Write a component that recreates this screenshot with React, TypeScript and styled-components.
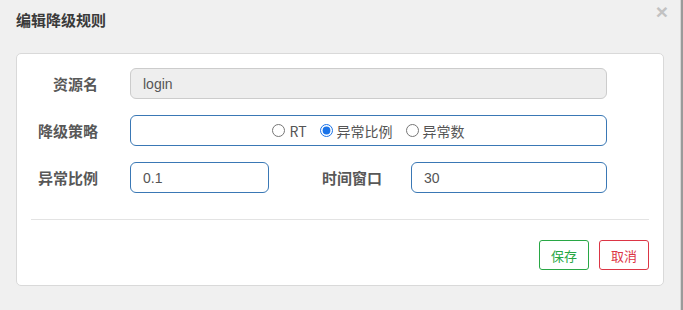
import React from "react";
import styled, { createGlobalStyle } from "styled-components";

const GlobalStyle = createGlobalStyle`
  html, body {
    margin: 0;
    padding: 0;
    background: #f0f0f0;
    font-family: "Noto Sans CJK SC", "Liberation Sans", sans-serif;
    font-size: 14px;
    color: #555;
  }
`

const Page = styled.div`
  display: flex;
  width: 683px;
  height: 310px;
  overflow: hidden;
`

const Dialog = styled.div`
  width: 680px;
  height: 310px;
  background: #f0f0f0;
  box-sizing: border-box;
  padding: 0 16px 0 16px;
  display: flex;
  flex-direction: column;
`

const Backdrop = styled.div`
  flex: 1;
  background: #9a9a9a;
  border-left: 1px solid #d6d6d6;
`

const Header = styled.div`
  display: flex;
  align-items: flex-start;
  height: 53px;
  position: relative;
`

const Title = styled.h4`
  margin: 10px 0 0 0;
  font-size: 15px;
  line-height: 20px;
  font-weight: 700;
  color: #3a3a3a;
  flex: 1;
`

const CloseButton = styled.button`
  position: absolute;
  right: -4px;
  top: 0px;
  height: 24px;
  border: none;
  background: none;
  color: #c2c2c2;
  font-size: 21px;
  font-weight: 700;
  line-height: 22px;
  font-family: "Liberation Sans", sans-serif;
  padding: 0;
  cursor: pointer;
`

const Card = styled.div`
  background: #fff;
  border: 1px solid #d9d9d9;
  border-radius: 5px;
  width: 648px;
  box-sizing: border-box;
  padding: 14px 14px 15px 14px;
`

const Form = styled.div`
  display: flex;
  flex-direction: column;
  gap: 16px;
  padding-right: 42px;
`

const Row = styled.div`
  display: flex;
  align-items: center;
  height: 31px;
`

const Label = styled.label<{ $width: number }>`
  width: ${({ $width }) => $width}px;
  flex: none;
  text-align: right;
  font-weight: 700;
  font-size: 15px;
  color: #585858;
  margin-right: ${({ $width }) => ($width > 80 ? 29 : 32)}px;
`

const TextBox = styled.div<{ $disabled?: boolean; $width?: number }>`
  height: 31px;
  box-sizing: border-box;
  ${({ $width }) => ($width ? `width: ${$width}px; flex: none;` : "flex: 1;")}
  border: 1px solid ${({ $disabled }) => ($disabled ? "#ccc" : "#3a78b5")};
  background: ${({ $disabled }) => ($disabled ? "#eee" : "#fff")};
  border-radius: 6px;
  padding: 0 12px;
  display: flex;
  align-items: center;
  font-family: "Liberation Sans", "Noto Sans CJK SC", sans-serif;
  font-size: 14px;
  color: #555;
`

const RadioGroup = styled(TextBox)`
  justify-content: center;
  gap: 13px;
  font-family: "Noto Sans CJK SC", "Liberation Sans", sans-serif;
`

const RadioOption = styled.label`
  display: flex;
  align-items: center;
  gap: 4px;
  color: #555;
  font-size: 14px;

  input {
    margin: 0;
    width: 13px;
    height: 13px;
    accent-color: #1a73e8;
  }
`

const Divider = styled.div`
  height: 1px;
  background: #e3e3e3;
  margin: 26px 0 20px;
`

const Footer = styled.div`
  display: flex;
  justify-content: flex-end;
  gap: 10px;
`

const ActionButton = styled.button<{ $color: string }>`
  height: 30px;
  width: 50px;
  box-sizing: border-box;
  border: 1px solid ${({ $color }) => $color};
  color: ${({ $color }) => $color};
  background: #fff;
  border-radius: 3px;
  font-family: "Noto Sans CJK SC", sans-serif;
  font-size: 13px;
  padding: 0;
  cursor: pointer;
`

const App: React.FC = () => (
  <Page>
    <GlobalStyle />
    <Dialog>
      <Header>
        <Title>编辑降级规则</Title>
        <CloseButton>×</CloseButton>
      </Header>

      <Card>
        <Form>
          <Row>
            <Label $width={67}>资源名</Label>
            <TextBox $disabled>login</TextBox>
          </Row>

          <Row>
            <Label $width={67}>降级策略</Label>
            <RadioGroup>
              <RadioOption>
                <input type="radio" name="grade" readOnly />
                <span>RT</span>
              </RadioOption>
              <RadioOption>
                <input type="radio" name="grade" defaultChecked />
                <span>异常比例</span>
              </RadioOption>
              <RadioOption>
                <input type="radio" name="grade" readOnly />
                <span>异常数</span>
              </RadioOption>
            </RadioGroup>
          </Row>

          <Row>
            <Label $width={67}>异常比例</Label>
            <TextBox $width={139}>0.1</TextBox>
            <Label $width={113}>时间窗口</Label>
            <TextBox>30</TextBox>
          </Row>
        </Form>

        <Divider />

        <Footer>
          <ActionButton $color="#28a745">保存</ActionButton>
          <ActionButton $color="#dc3545">取消</ActionButton>
        </Footer>
      </Card>
    </Dialog>
    <Backdrop />
  </Page>
);

export default App;
